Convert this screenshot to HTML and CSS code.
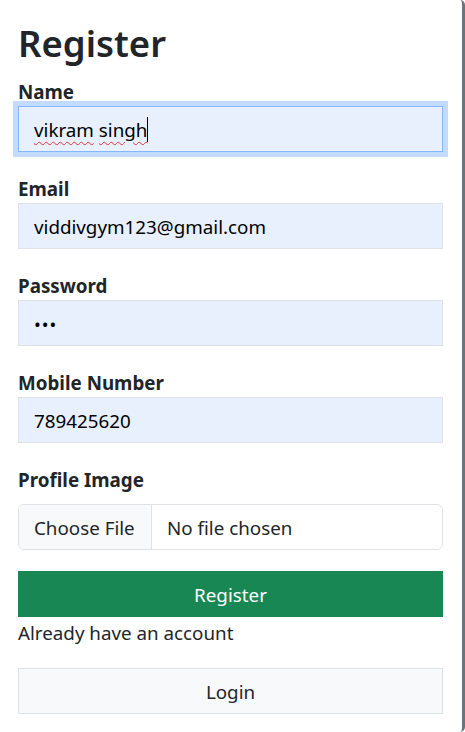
FILE: index.html
```html
<!DOCTYPE html>
<html lang="en">
<head>
<meta charset="utf-8">
<title>Register</title>
<link rel="stylesheet" href="styles.css">
</head>
<body>
<div class="frame">
  <form class="register">
    <h2 class="title">Register</h2>
    <div class="group">
      <label class="label">Name</label>
      <div class="field field-focus"><span class="value"><span class="typo">vikram</span> <span class="typo">singh</span></span><span class="caret"></span></div>
    </div>
    <div class="group">
      <label class="label">Email</label>
      <div class="field">viddivgym123@gmail.com</div>
    </div>
    <div class="group">
      <label class="label">Password</label>
      <div class="field field-pass">&#8226;&#8226;&#8226;</div>
    </div>
    <div class="group">
      <label class="label">Mobile Number</label>
      <div class="field">789425620</div>
    </div>
    <div class="group group-file">
      <label class="label">Profile Image</label>
      <div class="file">
        <span class="file-btn">Choose File</span>
        <span class="file-name">No file chosen</span>
      </div>
    </div>
    <button type="button" class="btn btn-success">Register</button>
    <p class="note">Already have an account</p>
    <button type="button" class="btn btn-light">Login</button>
  </form>
</div>
</body>
</html>
```

FILE: styles.css
```css
* { box-sizing: border-box; }
html, body { margin: 0; padding: 0; background: #fff; }
body {
  font-family: "Noto Sans", "Open Sans", sans-serif;
  font-size: 18.8px;
  color: #212529;
}
.frame {
  width: 465px;
  height: 732px;
  border-right: 3px solid #6c7379;
  border-radius: 0 5px 5px 0;
  overflow: hidden;
}
.register {
  display: flex;
  flex-direction: column;
  padding: 20px 19px 0 18px;
}
.title {
  margin: 0 0 11px;
  font-size: 36.5px;
  line-height: 46px;
  font-weight: 600;
}
.group {
  display: flex;
  flex-direction: column;
  margin-bottom: 22px;
}
.label {
  font-weight: 700;
  line-height: 29px;
  height: 29px;
  padding-top: 1px;
}
.field {
  height: 46px;
  padding: 2px 15px 0;
  display: flex;
  align-items: center;
  background: #e8f0fe;
  border: 1px solid #dee2e6;
  color: #000;
  line-height: 29px;
  white-space: nowrap;
}
.field-focus {
  border-color: #86b7fe;
  box-shadow: 0 0 0 5px #c2dbfe;
}
.value { white-space: pre; }
.typo {
  text-decoration: underline wavy #e5303a;
  text-decoration-thickness: 1.2px;
  text-underline-offset: 4px;
}
.caret {
  display: inline-block;
  width: 1px;
  height: 25px;
  background: #000;
  margin-top: -2px;
}
.field-pass {
  font-size: 18px;
  letter-spacing: 1px;
}
.group-file { margin-bottom: 21px; }
.group-file .label { margin-bottom: 10px; }
.file {
  height: 46px;
  display: flex;
  border: 1px solid #dee2e6;
  border-radius: 6px;
  overflow: hidden;
  background: #fff;
}
.file-btn {
  width: 133px;
  padding: 2px 0 0 15px;
  display: flex;
  align-items: center;
  background: #f8f9fa;
  border-right: 1px solid #dee2e6;
}
.file-name {
  display: flex;
  align-items: center;
  padding: 2px 0 0 15px;
}
.btn {
  height: 46px;
  border: 1px solid transparent;
  border-radius: 0;
  font: inherit;
  line-height: 29px;
  padding: 2px 0 0;
  width: 100%;
}
.btn-success {
  background: #198754;
  border-color: #198754;
  color: #fff;
}
.btn-light {
  background: #f8f9fa;
  border-color: #dee2e6;
  color: #212529;
}
.note {
  margin: 1px 0 21px;
  padding-top: 1px;
  line-height: 29px;
  height: 29px;
}
```
